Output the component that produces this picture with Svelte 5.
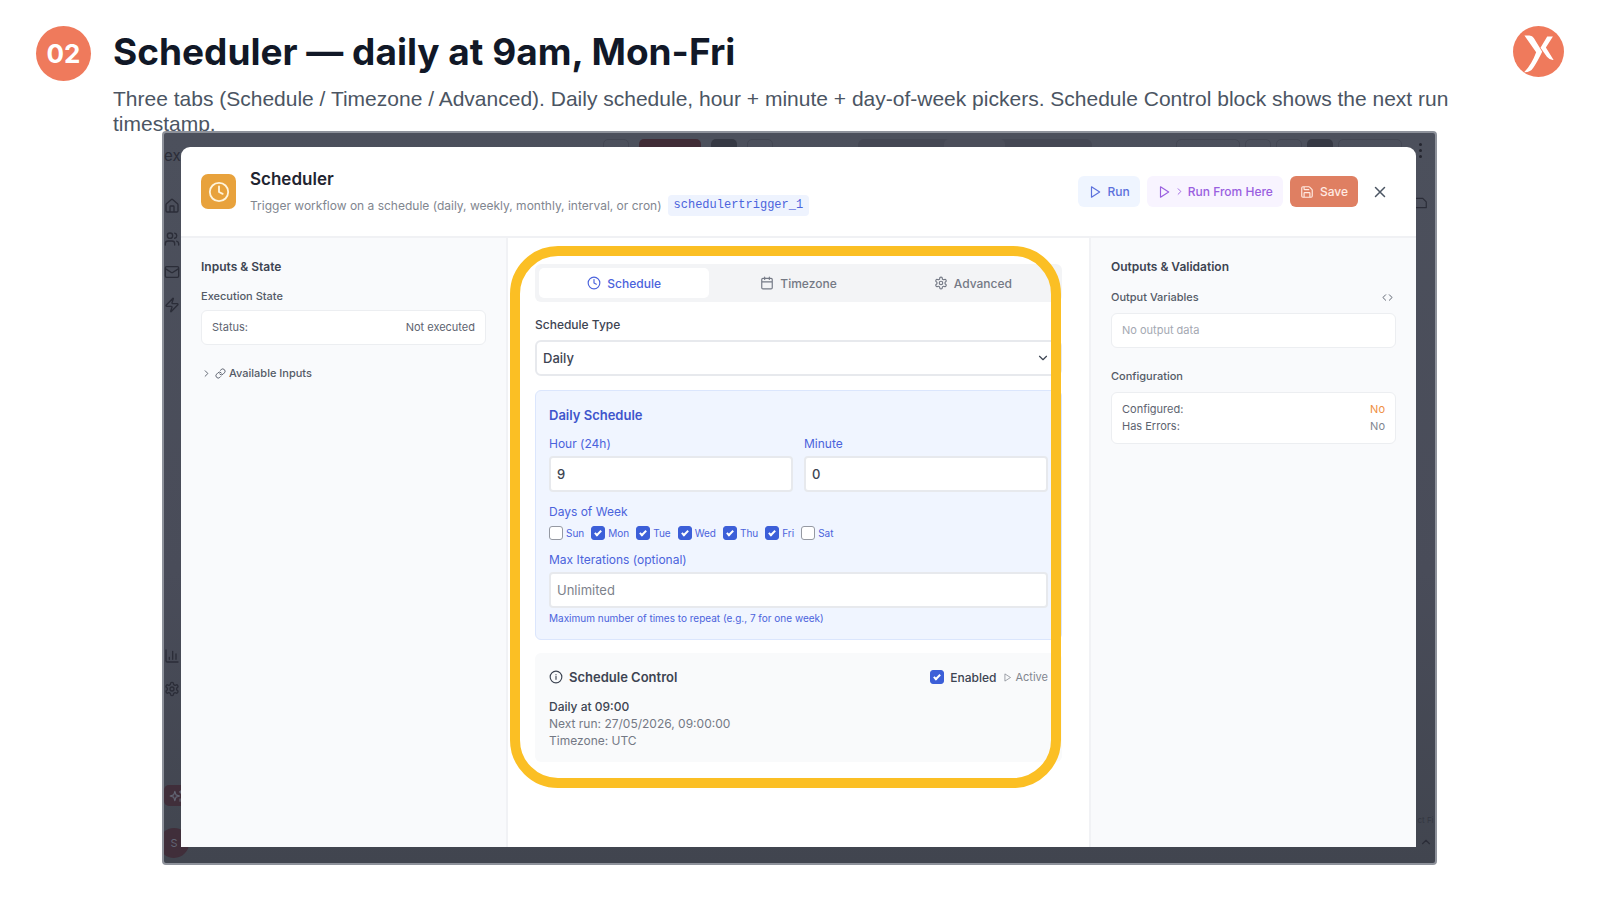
<script lang="ts">
    type Tab = 'schedule' | 'timezone' | 'advanced'

    let tab: Tab = 'schedule'
    let scheduleType = 'daily'
    let hour = '9'
    let minute = '0'
    let maxIterations = ''
    let enabled = true

    let days = [
        {name: 'Sun', on: false},
        {name: 'Mon', on: true},
        {name: 'Tue', on: true},
        {name: 'Wed', on: true},
        {name: 'Thu', on: true},
        {name: 'Fri', on: true},
        {name: 'Sat', on: false},
    ]

    const tabs: {id: Tab, label: string}[] = [
        {id: 'schedule', label: 'Schedule'},
        {id: 'timezone', label: 'Timezone'},
        {id: 'advanced', label: 'Advanced'},
    ]

    const gear = 'M12.22 2h-.44a2 2 0 0 0-2 2v.18a2 2 0 0 1-1 1.73l-.43.25a2 2 0 0 1-2 0l-.15-.08a2 2 0 0 0-2.73.73l-.22.38a2 2 0 0 0 .73 2.73l.15.1a2 2 0 0 1 1 1.72v.51a2 2 0 0 1-1 1.74l-.15.09a2 2 0 0 0-.73 2.73l.22.38a2 2 0 0 0 2.73.73l.15-.08a2 2 0 0 1 2 0l.43.25a2 2 0 0 1 1 1.73V20a2 2 0 0 0 2 2h.44a2 2 0 0 0 2-2v-.18a2 2 0 0 1 1-1.73l.43-.25a2 2 0 0 1 2 0l.15.08a2 2 0 0 0 2.73-.73l.22-.39a2 2 0 0 0-.73-2.73l-.15-.08a2 2 0 0 1-1-1.74v-.5a2 2 0 0 1 1-1.74l.15-.09a2 2 0 0 0 .73-2.73l-.22-.38a2 2 0 0 0-2.73-.73l-.15.08a2 2 0 0 1-2 0l-.43-.25a2 2 0 0 1-1-1.73V4a2 2 0 0 0-2-2zM15 12a3 3 0 1 1-6 0 3 3 0 0 1 6 0z'

    const icons = {
        schedule: 'M22 12a10 10 0 1 1-20 0 10 10 0 0 1 20 0zM12 6v6l4 2',
        timezone: 'M8 2v4M16 2v4M5 4h14a2 2 0 0 1 2 2v14a2 2 0 0 1-2 2H5a2 2 0 0 1-2-2V6a2 2 0 0 1 2-2zM3 10h18',
        advanced: gear,
        play: 'M6 3l14 9-14 9z',
        right: 'M9 18l6-6-6-6',
        down: 'M6 9l6 6 6-6',
        up: 'M18 15l-6-6-6 6',
        close: 'M18 6L6 18M6 6l12 12',
        save: 'M15.2 3a2 2 0 0 1 1.4.6l3.8 3.8a2 2 0 0 1 .6 1.4V19a2 2 0 0 1-2 2H5a2 2 0 0 1-2-2V5a2 2 0 0 1 2-2zM17 21v-7a1 1 0 0 0-1-1H8a1 1 0 0 0-1 1v7M7 3v4a1 1 0 0 0 1 1h7',
        link: 'M10 13a5 5 0 0 0 7.54.54l3-3a5 5 0 0 0-7.07-7.07l-1.72 1.71M14 11a5 5 0 0 0-7.54-.54l-3 3a5 5 0 0 0 7.07 7.07l1.71-1.71',
        code: 'M16 18l6-6-6-6M8 6l-6 6 6 6',
        info: 'M22 12a10 10 0 1 1-20 0 10 10 0 0 1 20 0zM12 16v-5M12 8h.01',
        home: 'M15 21v-8a1 1 0 0 0-1-1h-4a1 1 0 0 0-1 1v8M3 10a2 2 0 0 1 .7-1.5l7-6a2 2 0 0 1 2.6 0l7 6A2 2 0 0 1 21 10v9a2 2 0 0 1-2 2H5a2 2 0 0 1-2-2z',
        users: 'M16 21v-2a4 4 0 0 0-4-4H6a4 4 0 0 0-4 4v2M13 7a4 4 0 1 1-8 0 4 4 0 0 1 8 0zM22 21v-2a4 4 0 0 0-3-3.9M16 3.1a4 4 0 0 1 0 7.8',
        mail: 'M4 4h16a2 2 0 0 1 2 2v12a2 2 0 0 1-2 2H4a2 2 0 0 1-2-2V6a2 2 0 0 1 2-2zM22 7l-9 5.7a2 2 0 0 1-2 0L2 7',
        zap: 'M4 14a1 1 0 0 1-.8-1.6l9.9-10.2a.5.5 0 0 1 .9.5l-2 6A1 1 0 0 0 13 10h7a1 1 0 0 1 .8 1.6l-9.9 10.2a.5.5 0 0 1-.9-.5l2-6A1 1 0 0 0 11 14z',
        chart: 'M3 3v16a2 2 0 0 0 2 2h16M18 17V9M13 17V5M8 17v-3',
        sparkle: 'M10 4l2 6 6 2-6 2-2 6-2-6-6-2 6-2zM20 3v4M22 5h-4M19 17v4',
        file: 'M3 4h12l6 6v10H3',
    }

    const navIcons = [icons.home, icons.users, icons.mail, icons.zap]
</script>

{#snippet icon(d: string, cls: string)}
    <svg class="icon {cls}" viewBox="0 0 24 24" aria-hidden="true"><path {d} /></svg>
{/snippet}

<div class="slide">
    <header class="slide-header">
        <span class="step">02</span>
        <div class="headline">
            <h1>Scheduler — daily at 9am, Mon-Fri</h1>
            <p>Three tabs (Schedule / Timezone / Advanced). Daily schedule, hour + minute + day-of-week pickers. Schedule Control block shows the next run timestamp.</p>
        </div>
        <svg class="logo" viewBox="38 48 152 152" role="img" aria-label="Logo">
            <circle cx="114" cy="124" r="76" fill="#ef7a5c" />
            <path fill="#fff" d="M72 76h15q9 0 13 8l25 41q-14 29-26 47-9 15-28 14 23-24 36-60z" />
            <path fill="#fff" d="M140 79h17l-21 33 23 37q-12 1-20-9l-19-27z" />
        </svg>
    </header>

    <div class="frame">
        <!-- the dimmed app behind the dialog -->
        <div class="backdrop" aria-hidden="true">
            <div class="sidebar">
                <span class="brand">ex</span>
                <div class="nav">
                    {#each navIcons as d}
                        {@render icon(d, 'nav-icon')}
                    {/each}
                </div>
                <div class="nav nav-bottom">
                    {@render icon(icons.chart, 'nav-icon')}
                    {@render icon(gear, 'nav-icon')}
                </div>
                <span class="assistant">{@render icon(icons.sparkle, 'small')}</span>
                <span class="avatar">S</span>
            </div>
            <div class="topbar">
                <div class="group">
                    <i class="ghost w26"></i>
                    <i class="red"></i>
                    <i class="dark"></i>
                    <i class="ghost w26"></i>
                </div>
                <div class="switcher"><i></i></div>
                <div class="group">
                    <i class="ghost w64"></i>
                    <i class="ghost w26"></i>
                    <i class="ghost w26"></i>
                    <i class="dark"></i>
                    <i class="ghost w64"></i>
                </div>
            </div>
            <div class="rail">
                <span class="dots"><i></i><i></i><i></i></span>
                {@render icon(icons.file, 'file')}
                <span class="cut">ct Fi</span>
                {@render icon(icons.up, 'small')}
            </div>
        </div>

        <div class="modal" role="dialog" aria-labelledby="dialog-title">
            <header class="modal-header">
                <span class="badge">{@render icon(icons.schedule, 'large')}</span>
                <div class="titles">
                    <h2 id="dialog-title">Scheduler</h2>
                    <div class="subtitle">
                        <span>Trigger workflow on a schedule (daily, weekly, monthly, interval, or cron)</span>
                        <code>schedulertrigger_1</code>
                    </div>
                </div>
                <div class="actions">
                    <button class="run">{@render icon(icons.play, 'small')}Run</button>
                    <button class="run-from">
                        {@render icon(icons.play, 'small')}{@render icon(icons.right, 'tiny')}<span>Run From Here</span>
                    </button>
                    <button class="save">{@render icon(icons.save, 'small')}Save</button>
                    <button class="close" aria-label="Close">{@render icon(icons.close, 'medium')}</button>
                </div>
            </header>

            <div class="columns">
                <aside class="left">
                    <h3>Inputs &amp; State</h3>
                    <h4>Execution State</h4>
                    <div class="box">
                        <div class="row"><span>Status:</span><span>Not executed</span></div>
                    </div>
                    <button class="toggle">
                        {@render icon(icons.right, 'tiny')}
                        {@render icon(icons.link, 'tiny')}
                        <span>Available Inputs</span>
                    </button>
                </aside>

                <main>
                    <div class="region">
                        <div class="tabs" role="tablist">
                            {#each tabs as t}
                                <button role="tab" class:active={tab === t.id} aria-selected={tab === t.id} on:click={() => tab = t.id}>
                                    {@render icon(icons[t.id], 'small')}{t.label}
                                </button>
                            {/each}
                        </div>

                        <label class="type-label" for="type">Schedule Type</label>
                        <div class="select">
                            <select id="type" bind:value={scheduleType}>
                                <option value="daily">Daily</option>
                                <option value="weekly">Weekly</option>
                                <option value="monthly">Monthly</option>
                            </select>
                            {@render icon(icons.down, 'chevron')}
                        </div>

                        <section class="daily">
                            <h3>Daily Schedule</h3>
                            <div class="time">
                                <div>
                                    <label for="hour">Hour (24h)</label>
                                    <input id="hour" type="text" bind:value={hour}>
                                </div>
                                <div>
                                    <label for="minute">Minute</label>
                                    <input id="minute" type="text" bind:value={minute}>
                                </div>
                            </div>
                            <fieldset>
                                <legend>Days of Week</legend>
                                <div class="days">
                                    {#each days as day}
                                        <label><input type="checkbox" bind:checked={day.on}>{day.name}</label>
                                    {/each}
                                </div>
                            </fieldset>
                            <label for="max">Max Iterations (optional)</label>
                            <input id="max" type="text" placeholder="Unlimited" bind:value={maxIterations}>
                            <p>Maximum number of times to repeat (e.g., 7 for one week)</p>
                        </section>

                        <section class="control">
                            <div class="control-head">
                                {@render icon(icons.info, 'small')}
                                <h3>Schedule Control</h3>
                                <label><input type="checkbox" bind:checked={enabled}>Enabled</label>
                                <span class="state">{@render icon(icons.play, 'mini')}{enabled ? 'Active' : 'Paused'}</span>
                            </div>
                            <p class="summary">Daily at 09:00</p>
                            <p>Next run: 27/05/2026, 09:00:00</p>
                            <p>Timezone: UTC</p>
                        </section>

                        <div class="highlight"></div>
                    </div>
                </main>

                <aside class="right">
                    <h3>Outputs &amp; Validation</h3>
                    <h4 class="spaced">Output Variables {@render icon(icons.code, 'tiny')}</h4>
                    <div class="box empty">No output data</div>
                    <h4 class="config">Configuration</h4>
                    <div class="box">
                        <div class="row"><span>Configured:</span><span class="warn">No</span></div>
                        <div class="row"><span>Has Errors:</span><span class="muted">No</span></div>
                    </div>
                </aside>
            </div>
        </div>
    </div>
</div>


<style>

    :global(body) {
        background: #fff;
    }

    .slide {
        box-sizing: border-box;
        display: flex;
        flex-direction: column;
        min-height: 100vh;
        padding: 26px 36px 35px;
        font-family: Inter, "Liberation Sans", sans-serif;
        color: #3d4452;
    }

    .slide *, .slide *::after {
        box-sizing: border-box;
    }

    h1, h2, h3, h4, p, fieldset, legend {
        margin: 0;
        padding: 0;
        border: none;
    }

    button, input, select {
        font: inherit;
        color: inherit;
    }

    button {
        display: flex;
        align-items: center;
        border: none;
        background: none;
        padding: 0;
        cursor: pointer;
    }

    .icon {
        flex: none;
        width: 14px;
        height: 14px;
        fill: none;
        stroke: currentColor;
        stroke-width: 2;
        stroke-linecap: round;
        stroke-linejoin: round;
    }

    .icon.mini { width: 9px; height: 9px; }
    .icon.tiny { width: 11px; height: 11px; }
    .icon.medium { width: 18px; height: 18px; }
    .icon.large { width: 22px; height: 22px; }

    /* slide header */

    .slide-header {
        display: flex;
        align-items: flex-start;
    }

    .step {
        flex: none;
        display: flex;
        align-items: center;
        justify-content: center;
        width: 55px;
        height: 55px;
        margin-right: 22px;
        border-radius: 50%;
        background: #ef7a5c;
        color: #fff;
        font-size: 26px;
        font-weight: 700;
    }

    .headline {
        flex: 1;
        margin-right: 56px;
    }

    h1 {
        font-size: 37px;
        line-height: 52px;
        font-weight: 700;
        color: #111827;
    }

    .headline p {
        margin-top: 8px;
        font-family: "Liberation Sans", Arial, sans-serif;
        font-size: 21px;
        line-height: 25px;
        color: #4b5563;
    }

    .logo {
        flex: none;
        width: 51px;
        height: 51px;
    }

    /* dimmed app */

    .frame {
        position: relative;
        flex: 1;
        display: flex;
        margin: -5px 127px 0 126px;
        padding: 14px 19px 16px 17px;
        border: 2px solid #8e929b;
        border-radius: 4px;
        background: linear-gradient(#4c505c, #494c59 60%, #41454f);
        z-index: 1;
    }

    .backdrop {
        position: absolute;
        inset: 0;
        overflow: hidden;
        color: #2b2d38;
    }

    .sidebar {
        position: absolute;
        inset: 0 auto 0 0;
        display: flex;
        flex-direction: column;
        width: 18px;
    }

    .brand {
        margin-top: 11px;
        font-size: 15px;
        line-height: 24px;
    }

    .nav {
        display: flex;
        flex-direction: column;
        gap: 17px;
        margin-top: 30px;
    }

    .nav-bottom {
        margin-top: auto;
        margin-bottom: 88px;
    }

    .icon.nav-icon {
        width: 16px;
        height: 16px;
    }

    .assistant {
        display: flex;
        align-items: center;
        justify-content: center;
        width: 24px;
        height: 21px;
        margin-bottom: 22px;
        border-radius: 5px;
        background: #402e3a;
        color: #626675;
    }

    .avatar {
        width: 30px;
        height: 30px;
        margin: 0 0 5px -5px;
        border-radius: 50%;
        background: #402e3a;
        color: #626675;
        font-size: 11px;
        line-height: 30px;
        text-align: center;
    }

    .topbar {
        display: flex;
        justify-content: space-between;
        margin: 6px 33px 0 439px;
    }

    .group {
        display: flex;
        gap: 5px;
    }

    .topbar i {
        height: 20px;
        border-radius: 5px;
    }

    .group:first-child {
        gap: 10px;
    }

    .ghost { border: 1px solid #444753; }
    .w26 { width: 26px; }
    .w64 { width: 64px; }
    .red { width: 62px; background: #402c36; }
    .dark { width: 26px; background: #363944; }

    .switcher {
        display: flex;
        justify-content: center;
        width: 234px;
        border-radius: 6px;
        background: #454854;
    }

    .switcher i {
        width: 61px;
        background: #4b4e5a;
    }

    .rail {
        position: absolute;
        inset: 0 0 0 auto;
        display: flex;
        flex-direction: column;
        align-items: center;
        width: 19px;
        padding: 10px 0 14px;
    }

    .dots {
        display: flex;
        flex-direction: column;
        gap: 3px;
        margin-right: 10px;
    }

    .dots i {
        width: 3px;
        height: 3px;
        border-radius: 50%;
        background: #24262f;
    }

    .icon.file {
        margin: 38px 10px auto 0;
    }

    .cut {
        margin-bottom: 10px;
        font-size: 8px;
        white-space: nowrap;
        color: #343741;
    }

    /* modal */

    .modal {
        position: relative;
        flex: 1;
        display: flex;
        flex-direction: column;
        min-width: 0;
        border-radius: 9px 9px 0 0;
        background: #fff;
    }

    .modal-header {
        display: flex;
        align-items: center;
        height: 91px;
        padding: 0 27px 0 20px;
        border-bottom: 2px solid #f0f1f4;
    }

    .badge {
        display: flex;
        align-items: center;
        justify-content: center;
        width: 35px;
        height: 35px;
        margin-right: 14px;
        border-radius: 7px;
        background: #e8a23c;
        color: #fff5dd;
    }

    .titles {
        flex: 1;
    }

    h2 {
        font-size: 17px;
        line-height: 24px;
        font-weight: 600;
        color: #1f2430;
    }

    .subtitle {
        display: flex;
        align-items: center;
        gap: 6px;
        margin-top: 4px;
        font-size: 12px;
        color: #81868f;
    }

    code {
        padding: 0 6px;
        border-radius: 4px;
        background: #eef3fe;
        color: #4b63dc;
        font-family: "Liberation Mono", monospace;
        font-size: 12px;
        line-height: 21px;
    }

    .actions {
        display: flex;
        align-items: center;
        gap: 7px;
        font-size: 12px;
        font-weight: 500;
    }

    .actions button {
        gap: 6px;
        height: 31px;
        padding: 0 10px;
        border-radius: 6px;
    }

    .actions .run {
        background: #eff5ff;
        color: #5b70dc;
    }

    .actions .run-from {
        gap: 3px;
        background: #f8f4ff;
        color: #9a5fdf;
    }

    .actions .save {
        background: #df7f62;
        color: #ffeae2;
    }

    .actions .close {
        padding: 0 0 0 6px;
        color: #4b5563;
    }

    .columns {
        flex: 1;
        display: grid;
        grid-template-columns: 327fr 581fr 327fr;
    }

    aside {
        padding: 20px;
        background: #f9fafc;
        font-size: 11px;
        line-height: 17px;
    }

    .left {
        border-right: 2px solid #f1f2f5;
    }

    .right {
        border-left: 2px solid #f1f2f5;
    }

    aside h3 {
        font-size: 12px;
        line-height: 18px;
        font-weight: 600;
    }

    h4 {
        margin-top: 12px;
        font-size: 11px;
        line-height: 17px;
        font-weight: 500;
        color: #545a67;
    }

    .spaced {
        display: flex;
        align-items: center;
        justify-content: space-between;
        margin-top: 13px;
        padding-right: 3px;
    }

    .config {
        margin-top: 20px;
    }

    .box {
        margin-top: 5px;
        padding: 8px 10px;
        border: 1px solid #eceef1;
        border-radius: 6px;
        background: #fff;
        color: #5d636f;
    }

    .right .box {
        margin-top: 7px;
    }

    .row {
        display: flex;
        justify-content: space-between;
    }

    .box.empty { color: #a3a8b2; }
    .warn { color: #ef8f43; }
    .muted { color: #81868f; }

    .toggle {
        gap: 3px;
        margin-top: 20px;
        font-weight: 500;
        color: #545a67;
    }

    /* editor column */

    main {
        padding: 26px 27px 0;
    }

    .region {
        position: relative;
    }

    .highlight {
        position: absolute;
        inset: -18px 1px -26px -25px;
        border: 10px solid #fbbf24;
        border-radius: 48px;
        pointer-events: none;
    }

    .tabs {
        display: flex;
        gap: 4px;
        padding: 4px;
        border-radius: 6px;
        background: #f3f4f6;
    }

    .tabs button {
        flex: 1;
        justify-content: center;
        gap: 6px;
        height: 30px;
        border-radius: 5px;
        font-size: 12px;
        font-weight: 500;
        color: #747985;
    }

    .tabs .active {
        background: #fff;
        color: #4b63dc;
    }

    .type-label {
        display: block;
        margin: 14px 0 6px;
        font-size: 12px;
        line-height: 18px;
        font-weight: 500;
    }

    select, input[type="text"] {
        display: block;
        width: 100%;
        height: 36px;
        padding: 0 6px;
        border: 2px solid #e7e9ed;
        border-radius: 4px;
        background: #fff;
        font-size: 13px;
        font-weight: 500;
        color: #3d4452;
    }

    .select {
        position: relative;
    }

    select {
        appearance: none;
        border-radius: 6px;
    }

    .icon.chevron {
        position: absolute;
        right: 12px;
        top: 11px;
    }

    .daily {
        margin-top: 14px;
        padding: 14px 13px 12px;
        border: 1px solid #dbe6fd;
        border-radius: 6px;
        background: #f0f5ff;
        color: #4b63dc;
    }

    .daily h3 {
        font-size: 13px;
        line-height: 20px;
        font-weight: 600;
        color: #3f55cc;
    }

    .daily label, legend {
        display: block;
        margin-bottom: 3px;
        font-size: 12px;
        line-height: 18px;
    }

    .time {
        display: grid;
        grid-template-columns: 1fr 1fr;
        gap: 11px;
        margin-top: 10px;
    }

    fieldset {
        margin: 11px 0 9px;
    }

    .days {
        display: flex;
        gap: 7px;
    }

    .days label {
        display: flex;
        align-items: center;
        gap: 3px;
        margin: 0;
        font-size: 10px;
        line-height: 18px;
    }

    input[type="text"]::placeholder {
        color: #7d828c;
        font-weight: 400;
        opacity: 1;
    }

    input[type="checkbox"] {
        appearance: none;
        flex: none;
        display: flex;
        align-items: center;
        justify-content: center;
        width: 14px;
        height: 14px;
        margin: 0;
        border: 1px solid #9599a2;
        border-radius: 3px;
        background: #fff;
    }

    input[type="checkbox"]:checked {
        border-color: #3c5fd8;
        background: #3c5fd8;
    }

    input[type="checkbox"]:checked::after {
        content: "";
        width: 4px;
        height: 7px;
        margin-bottom: 2px;
        border: solid #fff;
        border-width: 0 2px 2px 0;
        transform: rotate(45deg);
    }

    .daily p {
        margin-top: 1px;
        font-size: 10px;
        line-height: 18px;
    }

    .control {
        margin-top: 13px;
        padding: 14px 14px 13px;
        border-radius: 6px;
        background: #f9fafb;
        font-size: 12px;
        line-height: 17px;
        color: #747985;
    }

    .control-head {
        display: flex;
        align-items: center;
        margin-bottom: 11px;
        color: #3d4452;
    }

    .control h3 {
        flex: 1;
        margin-left: 6px;
        font-size: 13px;
        line-height: 20px;
        font-weight: 600;
    }

    .control label {
        display: flex;
        align-items: center;
        gap: 6px;
        font-weight: 500;
    }

    .state {
        display: flex;
        align-items: center;
        gap: 3px;
        margin-left: 7px;
        font-size: 11px;
        color: #81868f;
    }

    .summary {
        font-weight: 500;
        color: #3d4452;
    }

</style>
